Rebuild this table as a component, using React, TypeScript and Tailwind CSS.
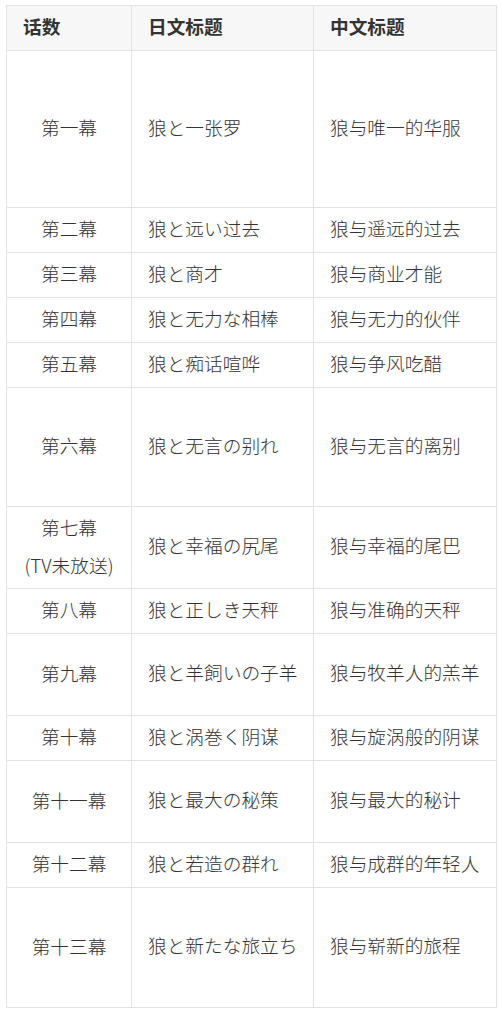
const rows: { no: string[]; ja: string; zh: string; h: number }[] = [
  { no: ["第一幕"], ja: "狼と一张罗", zh: "狼与唯一的华服", h: 157 },
  { no: ["第二幕"], ja: "狼と远い过去", zh: "狼与遥远的过去", h: 45 },
  { no: ["第三幕"], ja: "狼と商才", zh: "狼与商业才能", h: 45 },
  { no: ["第四幕"], ja: "狼と无力な相棒", zh: "狼与无力的伙伴", h: 45 },
  { no: ["第五幕"], ja: "狼と痴话喧哗", zh: "狼与争风吃醋", h: 45 },
  { no: ["第六幕"], ja: "狼と无言の别れ", zh: "狼与无言的离别", h: 119 },
  { no: ["第七幕", "(TV未放送)"], ja: "狼と幸福の尻尾", zh: "狼与幸福的尾巴", h: 82 },
  { no: ["第八幕"], ja: "狼と正しき天秤", zh: "狼与准确的天秤", h: 45 },
  { no: ["第九幕"], ja: "狼と羊飼いの子羊", zh: "狼与牧羊人的羔羊", h: 82 },
  { no: ["第十幕"], ja: "狼と涡巻く阴谋", zh: "狼与旋涡般的阴谋", h: 45 },
  { no: ["第十一幕"], ja: "狼と最大の秘策", zh: "狼与最大的秘计", h: 82 },
  { no: ["第十二幕"], ja: "狼と若造の群れ", zh: "狼与成群的年轻人", h: 45 },
  { no: ["第十三幕"], ja: "狼と新たな旅立ち", zh: "狼与崭新的旅程", h: 120 },
];

export default function App() {
  return (
    <div
      className="bg-white pl-[6px] pt-[5px] text-[#333] text-[18.7px]"
      style={{ fontFamily: '"Noto Sans CJK SC", "Noto Sans CJK JP", "Liberation Sans", sans-serif' }}
    >
      <table className="w-[490px] table-fixed border-collapse">
        <colgroup>
          <col className="w-[125px]" />
          <col className="w-[182px]" />
          <col className="w-[183px]" />
        </colgroup>
        <thead>
          <tr className="h-[45px] bg-[#f7f7f7]">
            <th className="border border-[#e3e3e3] px-4 pb-1 text-left font-bold">话数</th>
            <th className="border border-[#e3e3e3] px-4 pb-1 text-left font-bold">日文标题</th>
            <th className="border border-[#e3e3e3] px-4 pb-1 text-left font-bold">中文标题</th>
          </tr>
        </thead>
        <tbody className="font-light">
          {rows.map((r) => (
            <tr key={r.no[0]} style={{ height: r.h }}>
              <td className="border border-[#e3e3e3] px-1 pb-1 text-center leading-[38px] whitespace-nowrap">
                {r.no.map((line) => (
                  <div key={line}>{line}</div>
                ))}
              </td>
              <td className="border border-[#e3e3e3] px-4 pb-1 whitespace-nowrap">{r.ja}</td>
              <td className="border border-[#e3e3e3] px-4 pb-1 whitespace-nowrap">{r.zh}</td>
            </tr>
          ))}
        </tbody>
      </table>
    </div>
  );
}
